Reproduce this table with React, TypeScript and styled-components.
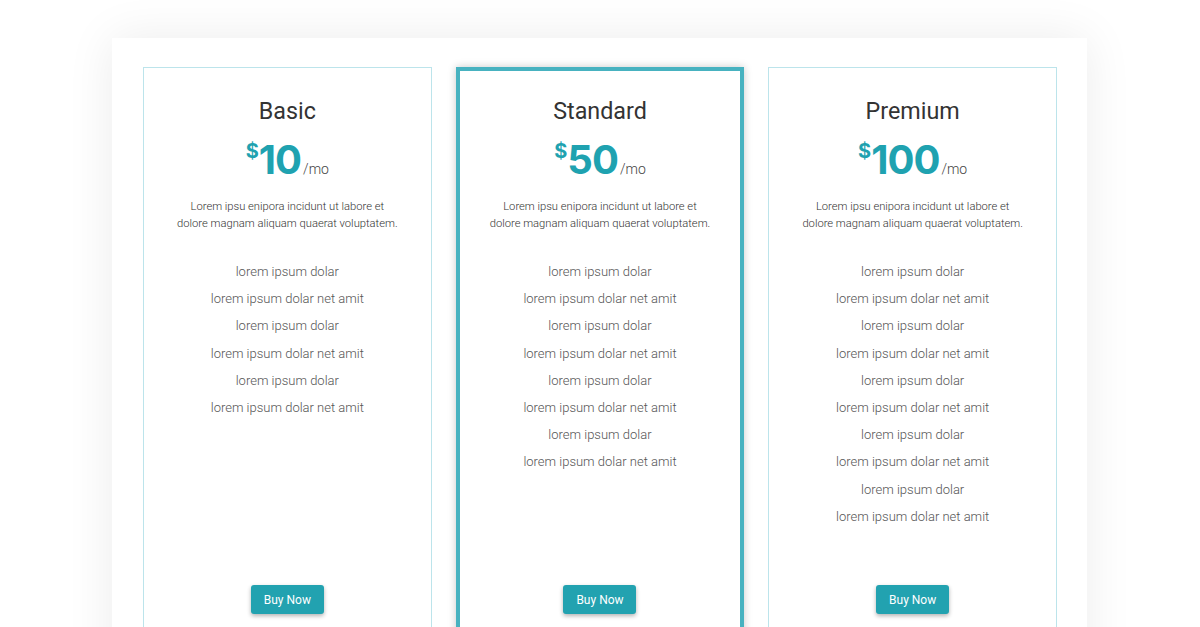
import styled, { createGlobalStyle } from "styled-components";

const GlobalStyle = createGlobalStyle`
  body {
    margin: 0;
    background: #ffffff;
    font-family: "Roboto", "Liberation Sans", sans-serif;
  }
`;

const Page = styled.div`
  width: 1200px;
  height: 627px;
  overflow: hidden;
  padding-top: 38px;
  box-sizing: border-box;
`;

const Panel = styled.div`
  width: 975px;
  margin-left: 112px;
  background: #ffffff;
  padding: 29px 30px 40px 31px;
  box-sizing: border-box;
  box-shadow: 0 0 45px rgba(0, 0, 0, 0.08);
`;

const Grid = styled.div`
  display: grid;
  grid-template-columns: repeat(3, 1fr);
  column-gap: 24px;
`;

const Card = styled.div<{ $featured?: boolean }>`
  display: flex;
  flex-direction: column;
  align-items: center;
  height: 578px;
  box-sizing: border-box;
  background: #ffffff;
  border: ${({ $featured }) => ($featured ? "4px solid #47b2c0" : "1px solid #bce4eb")};
  box-shadow: ${({ $featured }) => ($featured ? "0 0 8px rgba(0, 0, 0, 0.22)" : "none")};
  padding: ${({ $featured }) => ($featured ? "26px 20px 27px" : "29px 20px 30px")};
`;

const Title = styled.h2`
  margin: 0;
  font-size: 23.3px;
  line-height: 28px;
  font-weight: 400;
  color: #333333;
`;

const Price = styled.div`
  margin-top: 11px;
  display: flex;
  align-items: baseline;
  height: 48px;
  color: #1fa2b0;
  font-family: "Inter", "Liberation Sans", sans-serif;
`;

const Currency = styled.span`
  font-size: 20px;
  font-weight: 700;
  align-self: flex-start;
  margin-top: 3px;
`;

const Amount = styled.span`
  font-size: 40px;
  font-weight: 700;
  line-height: 48px;
  letter-spacing: -1px;
`;

const Per = styled.span`
  font-family: "Roboto", "Liberation Sans", sans-serif;
  font-size: 14px;
  font-weight: 300;
  color: #444444;
  margin-left: 2px;
`;

const Description = styled.p`
  margin: 14px 0 0;
  font-size: 11.2px;
  line-height: 17px;
  font-weight: 300;
  color: #333333;
  text-align: center;
`;

const Features = styled.ul`
  margin: 26px 0 0;
  padding: 0;
  list-style: none;
  text-align: center;
`;

const Feature = styled.li`
  font-size: 13px;
  line-height: 27.2px;
  font-weight: 300;
  color: #555555;
`;

const BuyButton = styled.button`
  margin-top: auto;
  width: 73px;
  height: 29px;
  border: none;
  border-radius: 3px;
  background: #22a2b0;
  color: #ffffff;
  font-family: "Roboto", "Liberation Sans", sans-serif;
  font-size: 12px;
  font-weight: 400;
  box-shadow: 0 2px 4px rgba(0, 0, 0, 0.3);
  cursor: pointer;
`;

const plans = [
  { name: "Basic", price: 10, features: 6 },
  { name: "Standard", price: 50, features: 8, featured: true },
  { name: "Premium", price: 100, features: 10 },
];

const App = () => {
  return (
    <Page>
      <GlobalStyle />
      <Panel>
        <Grid>
          {plans.map((plan) => (
            <Card key={plan.name} $featured={plan.featured}>
              <Title>{plan.name}</Title>
              <Price>
                <Currency>$</Currency>
                <Amount>{plan.price}</Amount>
                <Per>/mo</Per>
              </Price>
              <Description>
                Lorem ipsu enipora incidunt ut labore et
                <br />
                dolore magnam aliquam quaerat voluptatem.
              </Description>
              <Features>
                {Array.from({ length: plan.features }).map((_, i) => (
                  <Feature key={i}>
                    {i % 2 === 0 ? "lorem ipsum dolar" : "lorem ipsum dolar net amit"}
                  </Feature>
                ))}
              </Features>
              <BuyButton>Buy Now</BuyButton>
            </Card>
          ))}
        </Grid>
      </Panel>
    </Page>
  );
};

export default App;
